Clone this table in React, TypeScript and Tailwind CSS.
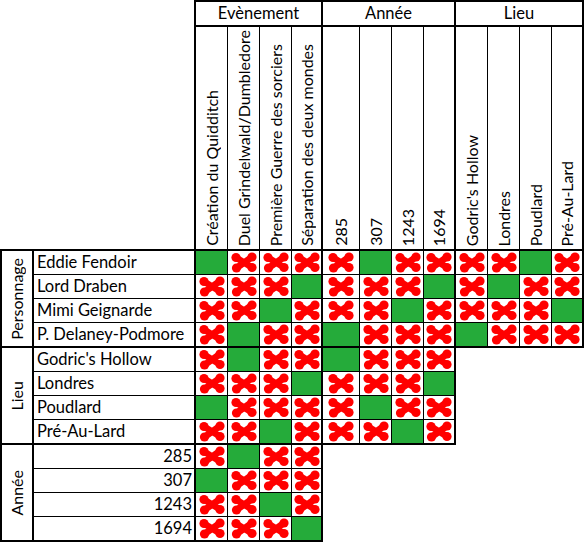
import React from 'react';

type Mark = 'G' | 'X';

const columns = [
  { label: 'Création du Quidditch', cls: 'w-[32px] border-r' },
  { label: 'Duel Grindelwald/Dumbledore', cls: 'w-[32px] border-r' },
  { label: 'Première Guerre des sorciers', cls: 'w-[32px] border-r' },
  { label: 'Séparation des deux mondes', cls: 'w-[31px] border-r-2' },
  { label: '285', cls: 'w-[37px] border-r' },
  { label: '307', cls: 'w-[32px] border-r' },
  { label: '1243', cls: 'w-[32px] border-r' },
  { label: '1694', cls: 'w-[32px] border-r-2' },
  { label: "Godric's Hollow", cls: 'w-[32px] border-r' },
  { label: 'Londres', cls: 'w-[32px] border-r' },
  { label: 'Poudlard', cls: 'w-[32px] border-r' },
  { label: 'Pré-Au-Lard', cls: 'w-[32px] border-r-2' },
];

const groups = [
  {
    title: 'Personnage',
    rightAlign: false,
    rows: [
      { name: 'Eddie Fendoir', marks: 'GXXXXGXXXXGX' },
      { name: 'Lord Draben', marks: 'XXXGXXXGXGXX' },
      { name: 'Mimi Geignarde', marks: 'XXGXXXGXXXXG' },
      { name: 'P. Delaney-Podmore', marks: 'XGXXGXXXGXXX' },
    ],
  },
  {
    title: 'Lieu',
    rightAlign: false,
    rows: [
      { name: "Godric's Hollow", marks: 'XGXXGXXX' },
      { name: 'Londres', marks: 'XXXGXXXG' },
      { name: 'Poudlard', marks: 'GXXXXGXX' },
      { name: 'Pré-Au-Lard', marks: 'XXGXXXGX' },
    ],
  },
  {
    title: 'Année',
    rightAlign: true,
    rows: [
      { name: '285', marks: 'XGXX' },
      { name: '307', marks: 'GXXX' },
      { name: '1243', marks: 'XXGX' },
      { name: '1694', marks: 'XXXG' },
    ],
  },
];

// painted red cross: two strokes with blobby ends
const Cross = () => (
  <svg width="26" height="21" viewBox="0 0 26 21">
    <g stroke="#ff0000" strokeWidth="6.5" strokeLinecap="round" fill="none">
      <path d="M5 5.5 L21 15.5" />
      <path d="M21 5 L5.5 16" />
    </g>
    <g fill="#ff0000">
      <circle cx="5" cy="5.5" r="4.6" />
      <circle cx="21" cy="5" r="4.6" />
      <circle cx="5.5" cy="16" r="4.6" />
      <circle cx="21" cy="15.5" r="4.6" />
    </g>
  </svg>
);

const Cell = ({ mark, cls, last }: { mark: Mark; cls: string; last: boolean }) => (
  <div
    className={`${cls} ${last ? 'border-b-2' : 'border-b'} border-black flex items-center justify-center ${
      mark === 'G' ? 'bg-[#25ab3a]' : 'bg-white'
    }`}
  >
    {mark === 'X' && <Cross />}
  </div>
);

export default function App() {
  return (
    <div className="w-[584px] h-[542px] bg-white text-black text-[16px] font-['Lato',sans-serif] flex flex-col">
      {/* header */}
      <div className="flex">
        <div className="w-[196px] h-[251px] border-r-2 border-b-2 border-black" />
        <div className="flex flex-col">
          <div className="flex h-[27px] text-[16.5px]">
            <div className="w-[127px] border-t-2 border-r-2 border-b-2 border-black flex items-center justify-center">
              Evènement
            </div>
            <div className="w-[133px] border-t-2 border-r-2 border-b-2 border-black flex items-center justify-center">
              Année
            </div>
            <div className="w-[128px] border-t-2 border-r-2 border-b-2 border-black flex items-center justify-center">
              Lieu
            </div>
          </div>
          <div className="flex h-[224px]">
            {columns.map((c) => (
              <div
                key={c.label}
                className={`${c.cls} border-b-2 border-black flex items-end justify-center pb-[3px]`}
              >
                <span className="[writing-mode:vertical-rl] rotate-180 leading-[20px] whitespace-nowrap">
                  {c.label}
                </span>
              </div>
            ))}
          </div>
        </div>
      </div>

      {/* body */}
      {groups.map((g) => (
        <div key={g.title} className="flex">
          <div className="w-[34px] border-l-2 border-r-2 border-b-2 border-black flex items-center justify-center">
            <span className="[writing-mode:vertical-rl] rotate-180 leading-[20px] whitespace-nowrap">
              {g.title}
            </span>
          </div>
          <div className="flex flex-col">
            {g.rows.map((r, ri) => {
              const last = ri === g.rows.length - 1;
              return (
                <div key={r.name} className={`flex ${last ? 'h-[25px]' : 'h-[24px]'}`}>
                  <div
                    className={`w-[162px] border-r-2 ${last ? 'border-b-2' : 'border-b'} border-black flex items-center leading-none text-[16.5px] ${
                      g.rightAlign ? 'justify-end pr-[2px]' : 'pl-[3px]'
                    }`}
                  >
                    {r.name}
                  </div>
                  {r.marks.split('').map((m, i) => (
                    <Cell key={i} mark={m as Mark} cls={columns[i].cls} last={last} />
                  ))}
                </div>
              );
            })}
          </div>
        </div>
      ))}
    </div>
  );
}
